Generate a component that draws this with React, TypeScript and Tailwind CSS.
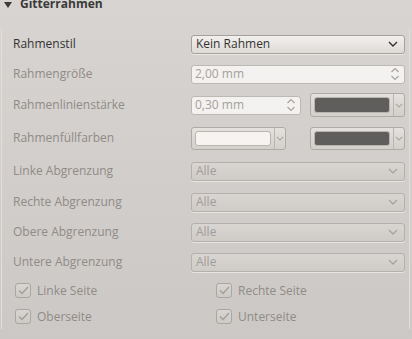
import { ReactNode } from "react";

const font = { fontFamily: '"Open Sans", "DejaVu Sans", sans-serif' };

function Chevron({ className }: { className: string }) {
  return (
    <svg width="10" height="6" viewBox="0 0 10 6" className={className}>
      <path d="M1 1 L5 5 L9 1" fill="none" stroke="currentColor" strokeWidth="1.4" />
    </svg>
  );
}

function Combo({ text, enabled }: { text: string; enabled?: boolean }) {
  return (
    <div
      className={`flex h-[19px] w-full items-center justify-between rounded-[3px] border pl-[4px] pr-[6px] text-[12px] shadow-[0_1px_0_rgba(255,255,255,0.5)] ${
        enabled
          ? "border-[#a5a19d] bg-gradient-to-b from-[#f2f0ee] to-[#dedad6] text-[#333]"
          : "border-[#b4b0ac] bg-gradient-to-b from-[#d9d5d2] to-[#cfcbc7] text-[#a19d99]"
      }`}
    >
      <span>{text}</span>
      <Chevron className={enabled ? "text-[#333]" : "text-[#a8a49f]"} />
    </div>
  );
}

function Spin({ text, className }: { text: string; className: string }) {
  return (
    <div
      className={`flex h-[19px] items-center justify-between rounded-[3px] border border-[#bcb8b4] bg-[#f4f2f0] pl-[3px] pr-[4px] text-[12px] text-[#a4a09c] ${className}`}
    >
      <span>{text}</span>
      <svg width="10" height="14" viewBox="0 0 10 14" className="text-[#a8a49f]">
        <path d="M1.5 5 L5 1.5 L8.5 5 M1.5 9 L5 12.5 L8.5 9" fill="none" stroke="currentColor" strokeWidth="1.2" />
      </svg>
    </div>
  );
}

function ColorButton({ swatch, h }: { swatch: string; h: string }) {
  return (
    <div
      className={`flex w-[95px] ${h} rounded-[3px] border border-[#aeaaa6] bg-gradient-to-b from-[#e4e1de] to-[#d3cfcb]`}
    >
      <div className="flex flex-1 p-[3px]">
        <div className={`flex-1 rounded-[3px] border border-[#b8b4b0] ${swatch}`} />
      </div>
      <div className="flex w-[11px] items-center justify-center border-l border-[#b9b5b1]">
        <svg width="8" height="5" viewBox="0 0 8 5" className="text-[#aaa6a2]">
          <path d="M0.8 0.8 L4 4 L7.2 0.8" fill="none" stroke="currentColor" strokeWidth="1.1" />
        </svg>
      </div>
    </div>
  );
}

function Row({ label, h, enabled, children }: { label: string; h: string; enabled?: boolean; children: ReactNode }) {
  return (
    <div className={`flex ${h} items-center`}>
      <div className={`w-[178px] text-[12px] ${enabled ? "text-[#333]" : "text-[#8f8b87]"}`}>{label}</div>
      <div className="flex flex-1 items-center">{children}</div>
    </div>
  );
}

function Check({ label }: { label: string }) {
  return (
    <div className="flex items-center gap-[6px] text-[12px] text-[#8f8b87]">
      <div className="flex h-[15px] w-[16px] items-center justify-center rounded-[3px] border border-[#aaa6a2] bg-gradient-to-b from-[#d9d5d2] to-[#cdc9c5]">
        <svg width="11" height="9" viewBox="0 0 11 9" className="text-[#a29e9a]">
          <path d="M1 4.5 L4 7.5 L10 1" fill="none" stroke="currentColor" strokeWidth="1.4" />
        </svg>
      </div>
      <span>{label}</span>
    </div>
  );
}

export default function App() {
  return (
    <div className="h-[339px] w-[412px] overflow-hidden bg-gradient-to-b from-[#d8d4d1] to-[#ccc8c5]" style={font}>
      <div className="-mt-[5px] flex h-[18px] items-center gap-[8px] pl-[4px] text-[12px] font-bold text-[#3a3a3a]">
        <svg width="8" height="6" viewBox="0 0 8 6" className="mt-[2px]">
          <path d="M0 0 H8 L4 6 Z" fill="#3a3a3a" />
        </svg>
        <span>Gitterrahmen</span>
      </div>
      <div className="ml-[1px] mr-[2px] mt-[16px] border-l border-r border-[#e2dedb] pl-[11px] pr-[4px]">
        <Row label="Rahmenstil" h="h-[30px]" enabled>
          <Combo text="Kein Rahmen" enabled />
        </Row>
        <Row label="Rahmengröße" h="h-[30px]">
          <Spin text="2,00 mm" className="w-full" />
        </Row>
        <Row label="Rahmenlinienstärke" h="h-[32px]">
          <Spin text="0,30 mm" className="w-[110px]" />
          <div className="ml-[9px]">
            <ColorButton swatch="bg-[#5f5e5c]" h="h-[24px]" />
          </div>
        </Row>
        <Row label="Rahmenfüllfarben" h="h-[34px]">
          <ColorButton swatch="bg-[#f6f3f1]" h="h-[23px]" />
          <div className="ml-[24px]">
            <ColorButton swatch="bg-[#5f5e5c]" h="h-[23px]" />
          </div>
        </Row>
        <Row label="Linke Abgrenzung" h="h-[32px]">
          <Combo text="Alle" />
        </Row>
        <Row label="Rechte Abgrenzung" h="h-[30px]">
          <Combo text="Alle" />
        </Row>
        <Row label="Obere Abgrenzung" h="h-[30px]">
          <Combo text="Alle" />
        </Row>
        <Row label="Untere Abgrenzung" h="h-[30px]">
          <Combo text="Alle" />
        </Row>
        <div className="grid grid-cols-[201px_1fr] pl-[2px]">
          <div className="flex h-[27px] items-center">
            <Check label="Linke Seite" />
          </div>
          <div className="flex h-[27px] items-center">
            <Check label="Rechte Seite" />
          </div>
          <div className="flex h-[25px] items-center">
            <Check label="Oberseite" />
          </div>
          <div className="flex h-[25px] items-center">
            <Check label="Unterseite" />
          </div>
        </div>
      </div>
    </div>
  );
}
